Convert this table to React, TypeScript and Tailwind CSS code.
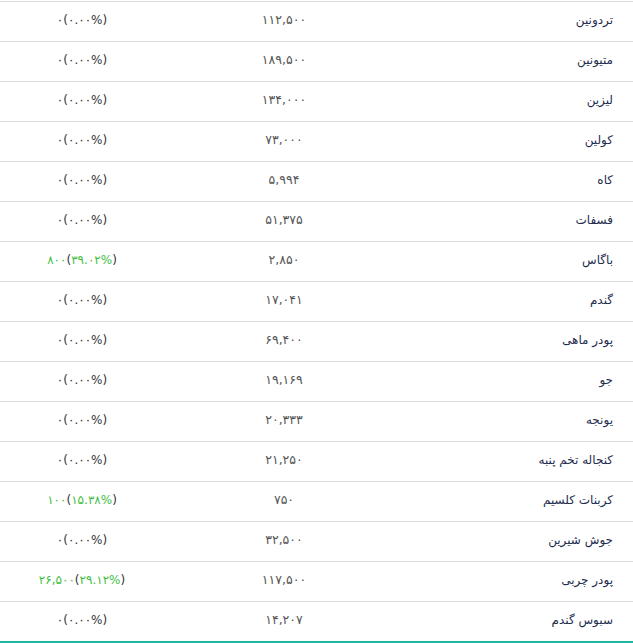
import React from "react";

type Row = {
  name: string;
  price: string;
  change: string;
  up?: boolean;
};

const rows: Row[] = [
  { name: "تردونین", price: "۱۱۲,۵۰۰", change: "۰.۰۰%" },
  { name: "متیونین", price: "۱۸۹,۵۰۰", change: "۰.۰۰%" },
  { name: "لیزین", price: "۱۳۴,۰۰۰", change: "۰.۰۰%" },
  { name: "کولین", price: "۷۳,۰۰۰", change: "۰.۰۰%" },
  { name: "کاه", price: "۵,۹۹۴", change: "۰.۰۰%" },
  { name: "فسفات", price: "۵۱,۳۷۵", change: "۰.۰۰%" },
  { name: "باگاس", price: "۲,۸۵۰", change: "۳۹.۰۲%", up: true },
  { name: "گندم", price: "۱۷,۰۴۱", change: "۰.۰۰%" },
  { name: "پودر ماهی", price: "۶۹,۴۰۰", change: "۰.۰۰%" },
  { name: "جو", price: "۱۹,۱۶۹", change: "۰.۰۰%" },
  { name: "یونجه", price: "۲۰,۳۳۳", change: "۰.۰۰%" },
  { name: "کنجاله تخم پنبه", price: "۲۱,۲۵۰", change: "۰.۰۰%" },
  { name: "کربنات کلسیم", price: "۷۵۰", change: "۱۵.۳۸%", up: true },
  { name: "جوش شیرین", price: "۳۲,۵۰۰", change: "۰.۰۰%" },
  { name: "پودر چربی", price: "۱۱۷,۵۰۰", change: "۲۹.۱۲%", up: true },
  { name: "سبوس گندم", price: "۱۴,۲۰۷", change: "۰.۰۰%" },
];

// amount of change for rows that went up
const amounts: Record<string, string> = {
  "باگاس": "۸۰۰",
  "کربنات کلسیم": "۱۰۰",
  "پودر چربی": "۲۶,۵۰۰",
};

export default function App() {
  return (
    <div
      dir="rtl"
      className="w-[633px] bg-white pt-[1px] text-[12px] font-['DejaVu_Sans',sans-serif]"
    >
      <div className="border-b-2 border-[#1fb5a3]">
        {rows.map((r) => (
          <div
            key={r.name}
            className="grid h-10 grid-cols-[229px_240px_164px] items-center border-t border-[#dcdcdc] pb-[3px]"
          >
            <div className="pr-5 text-right text-[#1e2d4d]">{r.name}</div>
            <div className="text-center text-[12.5px] text-[#555]">{r.price}</div>
            <div dir="ltr" className="text-center text-[#333]">
              <span className={r.up ? "text-[#3fbf3f]" : ""}>{r.up ? amounts[r.name] : "۰"}</span>
              (<span className={r.up ? "text-[#3fbf3f]" : ""}>{r.change}</span>)
            </div>
          </div>
        ))}
      </div>
    </div>
  );
}
